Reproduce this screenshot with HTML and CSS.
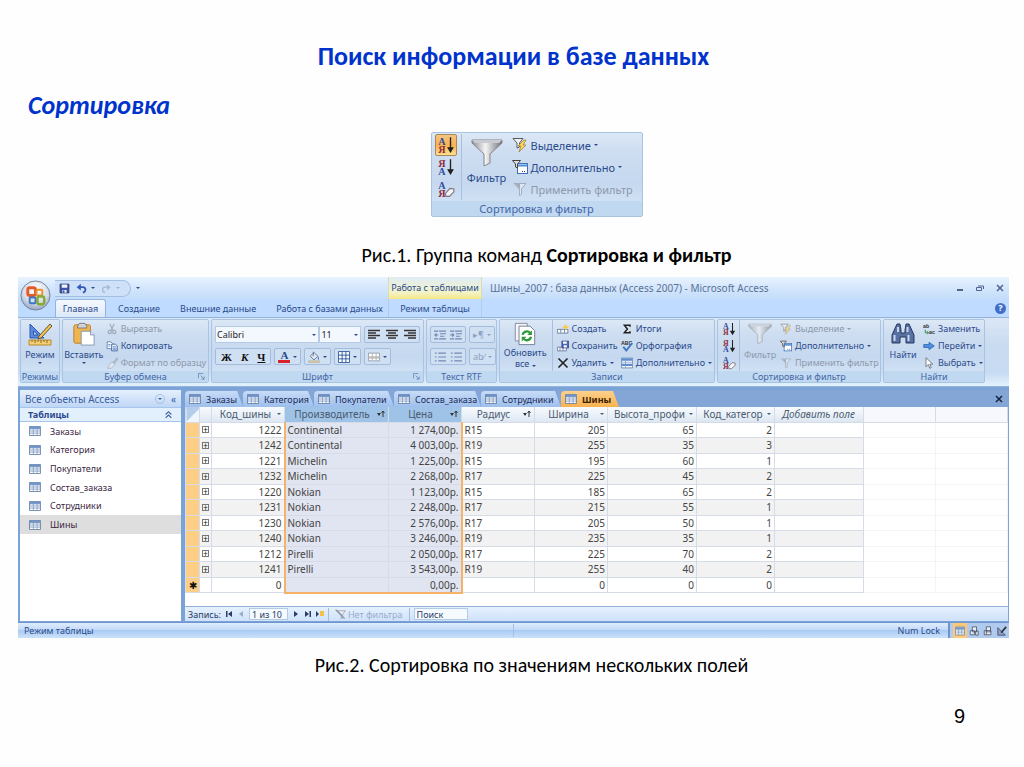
FILE: index.html
```html
<!DOCTYPE html>
<html lang="ru">
<head>
    <meta charset="UTF-8">
    <meta name="viewport" content="width=device-width, initial-scale=1.0">
    <title>Поиск информации в базе данных</title>
    <link rel="stylesheet" href="styles.css">
</head>
<body>
    <!-- Icon set -->
    <svg class="icon-defs" aria-hidden="true">
        <defs>
            <linearGradient id="steel" x1="0" x2="1" y1="0" y2="0">
                <stop offset="0" stop-color="#8c8f96"/>
                <stop offset="0.45" stop-color="#f4f4f4"/>
                <stop offset="1" stop-color="#6f7279"/>
            </linearGradient>
            <radialGradient id="orb" cx="0.5" cy="0.3" r="0.75">
                <stop offset="0" stop-color="#ffffff"/>
                <stop offset="0.6" stop-color="#d5dbe6"/>
                <stop offset="1" stop-color="#8a9bb8"/>
            </radialGradient>
            <symbol id="i-az" viewBox="0 0 16 16">
                <text x="1" y="8" class="glyph blue">А</text>
                <text x="1" y="15" class="glyph red">Я</text>
                <path d="M12 1v12M10 10.500L12 14l2-3.500z" stroke="#222" stroke-width="1.200" fill="#222"/>
            </symbol>
            <symbol id="i-za" viewBox="0 0 16 16">
                <text x="1" y="8" class="glyph red">Я</text>
                <text x="1" y="15" class="glyph blue">А</text>
                <path d="M12 1v12M10 10.500L12 14l2-3.500z" stroke="#222" stroke-width="1.200" fill="#222"/>
            </symbol>
            <symbol id="i-clear" viewBox="0 0 16 16">
                <text x="1" y="8" class="glyph blue">А</text>
                <text x="1" y="15" class="glyph red">Я</text>
                <path d="M7.500 12l4-4.500 3.500.5v2.500L11 14.500H8z" fill="#f6f3f4" stroke="#7a7480"/>
            </symbol>
            <symbol id="i-funnel" viewBox="0 0 32 28">
                <path d="M1 1h30v3L19 15v9l-6 3V15L1 4z" fill="url(#steel)" stroke="#85878c"/>
                <path d="M1 1h30L28 4H4z" fill="#c9cbd0"/>
            </symbol>
            <symbol id="i-bolt" viewBox="0 0 16 16">
                <path d="M1 1.500h10L7.500 6v4l-2.500 1V6z" fill="#f2f2f2" stroke="#555a66"/>
                <path d="M12 3L6 9h3l-2 6 7-7h-3l3-5z" fill="#ffd75a" stroke="#a5823a" stroke-width=".8"/>
            </symbol>
            <symbol id="i-adv" viewBox="0 0 16 16">
                <rect x="5.500" y="4.500" width="10" height="10" fill="#fff" stroke="#3b6fb8"/>
                <path d="M5.500 5.500h10v2h-10z" fill="#4c8ad9"/>
                <path d="M10 12.500h1m1 0h1" stroke="#335"/>
                <path d="M.5 1.500h8L5.500 5v4L3.500 8V5z" fill="#dfe0e4" stroke="#444"/>
            </symbol>
            <symbol id="i-apply" viewBox="0 0 16 16">
                <path d="M2 2.500h12L9.500 8v5.500l-2 1V8z" fill="#e9ecf0" stroke="#8b93a0"/>
                <path d="M3 3h5v6z" fill="#8b93a0"/>
            </symbol>
            <symbol id="i-table" viewBox="0 0 14 12">
                <path d="M.5.500h13v11H.5z" fill="#fff" stroke="#54719c"/>
                <path d="M1 1h12v2.500H1z" fill="#6a93cf"/>
                <path d="M1 3.500h12M1 6h12M1 8.500h12M5 1v10M9.500 1v10" stroke="#7f9ac0" fill="none"/>
            </symbol>
            <symbol id="i-design" viewBox="0 0 24 24">
                <path d="M2 2v14h14zM5.500 9v4H10z" fill="#5a8be0" stroke="#2c56ad" fill-rule="evenodd"/>
                <path d="M1 18h22v5H1z" fill="#f3ce74" stroke="#b98a2f"/>
                <path d="M4 18v2m3-2v3m3-3v2m3-2v3m3-3v2m3-2v3" stroke="#92691c"/>
                <path d="M22 2L11 14l-1 3 3-1L24 4z" fill="#f7c443" stroke="#5f554a"/>
            </symbol>
            <symbol id="i-paste" viewBox="0 0 24 26">
                <rect x="1" y="3" width="18" height="20" rx="2" fill="#efb551" stroke="#b77d2a"/>
                <path d="M5 4.500l2-3h6l2 3v2H5z" fill="#cfd2d8" stroke="#777"/>
                <path d="M9 10h10l4 4v11H9z" fill="#fff" stroke="#8496b3"/>
                <path d="M19 10v4h4" fill="#dce6f5" stroke="#8496b3"/>
            </symbol>
            <symbol id="i-cut" viewBox="0 0 16 16">
                <path d="M5 1l4.500 9M11 1L6.500 10" stroke="#7d8798" stroke-width="1.500"/>
                <circle cx="5" cy="12" r="2.200" fill="none" stroke="#7d8798" stroke-width="1.500"/>
                <circle cx="11" cy="12" r="2.200" fill="none" stroke="#7d8798" stroke-width="1.500"/>
            </symbol>
            <symbol id="i-copy" viewBox="0 0 16 16">
                <path d="M1.500 2.500h5l2 2v7h-7z" fill="#fff" stroke="#4469a8"/>
                <path d="M7.500 5.500h5l2.500 2.500v6.500H7.500z" fill="#e8f0fb" stroke="#28508f"/>
                <path d="M3 6h3M3 8h3M9 9h4M9 11h5M9 13h5" stroke="#4d78bf"/>
            </symbol>
            <symbol id="i-brush" viewBox="0 0 16 16">
                <path d="M15 1L9 7l2 2 4-5z" fill="#a9afb8" stroke="#818997"/>
                <path d="M8 6.500L12 10 7 15H2c2-2 2-6 6-8.500z" fill="#eceef1" stroke="#8b93a0"/>
            </symbol>
            <symbol id="i-left" viewBox="0 0 12 11"><path d="M0 1h12M0 3.500h8M0 6h12M0 8.500h8" stroke="#333" stroke-width="1.500"/></symbol>
            <symbol id="i-center" viewBox="0 0 12 11"><path d="M0 1h12M2 3.500h8M0 6h12M2 8.500h8" stroke="#333" stroke-width="1.500"/></symbol>
            <symbol id="i-right" viewBox="0 0 12 11"><path d="M0 1h12M4 3.500h8M0 6h12M4 8.500h8" stroke="#333" stroke-width="1.500"/></symbol>
            <symbol id="i-indent" viewBox="0 0 14 11"><path d="M0 1h5M6 1h8M7 4h7M7 7h5M0 10h5M6 10h8M5 5.500H1M3 3.500L1 5.500l2 2" fill="none" stroke="#7088b3" stroke-width="1.300"/></symbol>
            <symbol id="i-outdent" viewBox="0 0 14 11"><path d="M0 1h5M6 1h8M7 4h7M7 7h5M0 10h5M6 10h8M0 5.500h4M2.500 3.500l2 2-2 2" fill="none" stroke="#7088b3" stroke-width="1.300"/></symbol>
            <symbol id="i-list" viewBox="0 0 14 11"><path d="M1 1h2M1 5.500h2M1 10h2M5 1h9M5 5.500h9M5 10h9" stroke="#7088b3" stroke-width="1.300"/></symbol>
            <symbol id="i-bucket" viewBox="0 0 16 16">
                <path d="M3 7l5-5 5 5-5 5z" fill="#e2e7ef" stroke="#4f5f7c"/>
                <path d="M7 7V1" stroke="#4f5f7c"/>
                <path d="M13 7c2 2 2 4 1 5-1-1-1-3-1-5z" fill="#3d6fb8"/>
                <path d="M1 13h14v3H1z" fill="#d7c9a8" stroke="#a39a83" stroke-width=".5"/>
            </symbol>
            <symbol id="i-borders" viewBox="0 0 13 13"><path d="M.5.500h12v12H.5zM.5 4.500h12M.5 8.500h12M4.500.500v12M8.500.500v12" fill="#f7fbff" stroke="#335a9b"/></symbol>
            <symbol id="i-altrow" viewBox="0 0 14 10"><path d="M.5.500h13v9H.5z" fill="#fff" stroke="#8e98a8"/><path d="M1 4h12v3H1z" fill="#c9c3bb"/><path d="M5 1v8M9.500 1v8" stroke="#a9b2c0"/></symbol>
            <symbol id="i-refresh" viewBox="0 0 24 26">
                <path d="M1.500 1.500h13v19h-13z" fill="#f5f7fa" stroke="#7f8a9b"/>
                <path d="M5.500 4.500h12l5 5v15h-17z" fill="#fff" stroke="#6d7b91"/>
                <path d="M9.500 14a4.500 4.500 0 0 1 8-2M18.500 16a4.500 4.500 0 0 1-8 2" fill="none" stroke="#2f9a3c" stroke-width="2.500"/>
                <path d="M19.500 9v5h-5zM8.500 21v-5h5z" fill="#2f9a3c"/>
            </symbol>
            <symbol id="i-new" viewBox="0 0 16 16">
                <path d="M.5 8.500h14v5H.5z" fill="#f7f9fc" stroke="#53698f"/><path d="M5 9v4M10 9v4" stroke="#53698f"/>
                <path d="M11 1l1.500 3L16 5l-3 2-1 3-2-3-3-1 3-2z" fill="#ffc83d"/>
            </symbol>
            <symbol id="i-save-rec" viewBox="0 0 16 16">
                <path d="M.5 9.500h12v5H.5z" fill="#f7f9fc" stroke="#53698f"/><path d="M4 10v4M8 10v4" stroke="#53698f"/>
                <path d="M6.500 1.500h9v9h-9z" fill="#4d68b5" stroke="#2e3f80"/><path d="M8 2h5v3H8zM9 7h4v3H9z" fill="#fff"/>
            </symbol>
            <symbol id="i-delete" viewBox="0 0 16 16"><path d="M2 2l12 12M14 2L2 14" stroke="#222" stroke-width="2.200"/></symbol>
            <symbol id="i-sum" viewBox="0 0 16 16"><path d="M12 5V3H4.500L8.500 8l-4 5H12V11" fill="none" stroke="#222" stroke-width="2"/></symbol>
            <symbol id="i-spell" viewBox="0 0 16 16">
                <text x="0" y="6" class="tiny-glyph">ABC</text>
                <path d="M3 9l4 5 8-10" fill="none" stroke="#3e74c4" stroke-width="2.500"/>
            </symbol>
            <symbol id="i-more" viewBox="0 0 16 16"><path d="M.5 1.500h15v13H.5z" fill="#fff" stroke="#4b6ea8"/><path d="M1 2h14v3H1zM1 9h14v3H1z" fill="#5d8bd0"/><path d="M1 7h14M6 5v9" stroke="#7f9ac0"/></symbol>
            <symbol id="i-find" viewBox="0 0 24 24">
                <path d="M6 2h3l1 6v3h4V8l1-6h3l5 11v8h-8v-6h-6v6H1v-8z" fill="#5870a2" stroke="#27395f"/>
                <path d="M3.500 13v6M7 5v5M17.500 13v6M16.500 5v5" stroke="#c7d6f2" stroke-width="2"/>
            </symbol>
            <symbol id="i-replace" viewBox="0 0 16 16">
                <text x="0" y="7" class="tiny-glyph">ab</text><text x="8" y="15" class="tiny-glyph">ac</text>
                <path d="M3 9v4h4M5.500 11l2 2-2 2" fill="none" stroke="#2f8a4a" stroke-width="1.300"/>
            </symbol>
            <symbol id="i-goto" viewBox="0 0 16 16"><path d="M1 6h7V3l7 5-7 5v-3H1z" fill="#4f8fe0" stroke="#2a61ae"/></symbol>
            <symbol id="i-cursor" viewBox="0 0 16 16"><path d="M4 1v12l3-3 2 5 2-1-2-4.500h4z" fill="#fff" stroke="#555c6a"/></symbol>
            <symbol id="i-floppy" viewBox="0 0 16 16"><path d="M1.500 1.500h13v13h-13z" fill="#3f54a8" stroke="#26346f"/><path d="M4 2h8v5H4zM5 10h6v4H5z" fill="#f2f5fb"/><path d="M6 11h2v3H6z" fill="#26346f"/></symbol>
            <symbol id="i-undo" viewBox="0 0 16 16"><path d="M4 6h6c5 0 5 7 0 8" fill="none" stroke="#3359bb" stroke-width="2.600"/><path d="M7 1v10L1 6z" fill="#3359bb"/></symbol>
            <symbol id="i-redo" viewBox="0 0 16 16"><path d="M12 6H6C1 6 1 13 6 14" fill="none" stroke="#a9b9d6" stroke-width="2"/><path d="M9 2v9l5-5z" fill="#a9b9d6"/></symbol>
            <symbol id="i-office" viewBox="0 0 32 32">
                <circle cx="16" cy="16" r="15" fill="url(#orb)" stroke="#71819f"/>
                <rect x="8" y="8" width="8" height="8" rx="2" fill="none" stroke="#e2592a" stroke-width="3"/>
                <rect x="17" y="10" width="6" height="6" rx="1" fill="none" stroke="#e8932c" stroke-width="2"/>
                <rect x="10" y="18" width="6" height="6" rx="1" fill="none" stroke="#3d78c4" stroke-width="2"/>
                <rect x="18" y="17" width="7" height="8" rx="2" fill="none" stroke="#84ab35" stroke-width="2.500"/>
            </symbol>
            <symbol id="i-launch" viewBox="0 0 8 8"><path d="M.5 6V.500H6M3 3l4 4M7 4v3H4" fill="none" stroke="#6b8ab8"/></symbol>
            <symbol id="i-sorted" viewBox="0 0 8 8"><path d="M0 3h4L2 6z" fill="#333"/><path d="M6 7V1.500M4.500 3L6 1l1.500 2" fill="none" stroke="#333"/></symbol>
        </defs>
    </svg>

    <main class="slide">
        <h1>Поиск информации в базе данных</h1>
        <h2>Сортировка</h2>

        <figure class="fig-group">
            <section class="group group-large">
                <div class="group-body">
                    <div class="sort-buttons">
                        <button class="icon-button active" aria-label="По возрастанию"><svg><use href="#i-az"/></svg></button>
                        <button class="icon-button" aria-label="По убыванию"><svg><use href="#i-za"/></svg></button>
                        <button class="icon-button" aria-label="Очистить"><svg><use href="#i-clear"/></svg></button>
                    </div>
                    <button class="big-button"><svg><use href="#i-funnel"/></svg>Фильтр</button>
                    <div class="commands">
                        <button><svg><use href="#i-bolt"/></svg>Выделение<i class="arrow"></i></button>
                        <button><svg><use href="#i-adv"/></svg>Дополнительно<i class="arrow"></i></button>
                        <button disabled><svg><use href="#i-apply"/></svg>Применить фильтр</button>
                    </div>
                </div>
                <div class="group-title">Сортировка и фильтр</div>
            </section>
            <figcaption>Рис.1. Группа команд <b>Сортировка и фильтр</b></figcaption>
        </figure>

        <figure class="fig-window">
            <div class="window">
                <!-- Title bar -->
                <header class="title-bar">
                    <button class="office-button" aria-label="Office"><svg><use href="#i-office"/></svg></button>
                    <div class="title-left">
                        <div class="quick-access">
                            <button aria-label="Сохранить"><svg><use href="#i-floppy"/></svg></button>
                            <button aria-label="Отменить"><svg><use href="#i-undo"/></svg><i class="arrow"></i></button>
                            <button aria-label="Вернуть" disabled><svg><use href="#i-redo"/></svg><i class="arrow"></i></button>
                        </div>
                        <i class="arrow customize"></i>
                    </div>
                    <div class="context-title">Работа с таблицами</div>
                    <div class="title-right">
                        <span class="title-text">Шины_2007 : база данных (Access 2007) - Microsoft Access</span>
                        <button aria-label="Свернуть"><svg viewBox="0 0 8 8"><path d="M1 6h6" stroke="#50648c" stroke-width="2"/></svg></button>
                        <button aria-label="Восстановить"><svg viewBox="0 0 8 8"><path d="M.5 3.500h5v3h-5zM2 2h5.500v3" fill="none" stroke="#50648c"/></svg></button>
                        <button aria-label="Закрыть"><svg viewBox="0 0 8 8"><path d="M1 1l6 6M7 1L1 7" stroke="#50648c" stroke-width="1.500"/></svg></button>
                    </div>
                </header>

                <!-- Ribbon tabs -->
                <nav class="ribbon-tabs">
                    <div class="tab-list">
                        <button class="selected">Главная</button>
                        <button>Создание</button>
                        <button>Внешние данные</button>
                        <button>Работа с базами данных</button>
                    </div>
                    <button class="context-tab">Режим таблицы</button>
                    <button class="help" aria-label="Справка">?</button>
                </nav>

                <!-- Ribbon -->
                <div class="ribbon">
                    <section class="group">
                        <div class="group-body">
                            <button class="big-button"><svg><use href="#i-design"/></svg>Режим<i class="arrow"></i></button>
                        </div>
                        <div class="group-title">Режимы</div>
                    </section>

                    <section class="group">
                        <div class="group-body">
                            <button class="big-button paste"><svg><use href="#i-paste"/></svg>Вставить<i class="arrow"></i></button>
                            <div class="commands">
                                <button disabled><svg><use href="#i-cut"/></svg>Вырезать</button>
                                <button><svg><use href="#i-copy"/></svg>Копировать</button>
                                <button disabled><svg><use href="#i-brush"/></svg>Формат по образцу</button>
                            </div>
                        </div>
                        <div class="group-title">Буфер обмена<svg class="launcher"><use href="#i-launch"/></svg></div>
                    </section>

                    <section class="group">
                        <div class="group-body toolbars">
                            <div class="toolbar">
                                <div class="combos">
                                    <span class="combo combo-font"><select aria-label="Шрифт"><option>Calibri</option></select><i class="arrow"></i></span>
                                    <span class="combo combo-size"><select aria-label="Размер"><option>11</option></select><i class="arrow"></i></span>
                                </div>
                                <div class="button-set">
                                    <button aria-label="По левому краю"><svg><use href="#i-left"/></svg></button>
                                    <button aria-label="По центру"><svg><use href="#i-center"/></svg></button>
                                    <button aria-label="По правому краю"><svg><use href="#i-right"/></svg></button>
                                </div>
                            </div>
                            <div class="toolbar left">
                                <div class="button-set letters">
                                    <button><b>Ж</b></button>
                                    <button><b><em>К</em></b></button>
                                    <button><b><u>Ч</u></b></button>
                                </div>
                                <div class="button-set"><button aria-label="Цвет шрифта"><span class="font-color">A</span><i class="arrow"></i></button></div>
                                <div class="button-set"><button aria-label="Заливка"><svg><use href="#i-bucket"/></svg><i class="arrow"></i></button></div>
                                <div class="button-set"><button aria-label="Сетка"><svg><use href="#i-borders"/></svg><i class="arrow"></i></button></div>
                                <div class="button-set"><button aria-label="Чередование"><svg><use href="#i-altrow"/></svg><i class="arrow"></i></button></div>
                            </div>
                        </div>
                        <div class="group-title">Шрифт<svg class="launcher"><use href="#i-launch"/></svg></div>
                    </section>

                    <section class="group">
                        <div class="group-body toolbars rtf">
                            <div class="toolbar">
                                <div class="button-set">
                                    <button disabled aria-label="Уменьшить отступ"><svg><use href="#i-indent"/></svg></button>
                                    <button disabled aria-label="Увеличить отступ"><svg><use href="#i-outdent"/></svg></button>
                                </div>
                                <div class="button-set"><button disabled>▸¶<i class="arrow"></i></button></div>
                            </div>
                            <div class="toolbar">
                                <div class="button-set">
                                    <button disabled aria-label="Нумерация"><svg><use href="#i-list"/></svg></button>
                                    <button disabled aria-label="Маркеры"><svg><use href="#i-list"/></svg></button>
                                </div>
                                <div class="button-set"><button disabled>ab∕<i class="arrow"></i></button></div>
                            </div>
                        </div>
                        <div class="group-title">Текст RTF</div>
                    </section>

                    <section class="group">
                        <div class="group-body">
                            <button class="big-button wide"><svg><use href="#i-refresh"/></svg>Обновить<span>все <i class="arrow"></i></span></button>
                            <div class="commands divided">
                                <button><svg><use href="#i-new"/></svg>Создать</button>
                                <button><svg><use href="#i-save-rec"/></svg>Сохранить</button>
                                <button><svg><use href="#i-delete"/></svg>Удалить<i class="arrow"></i></button>
                            </div>
                            <div class="commands">
                                <button><svg><use href="#i-sum"/></svg>Итоги</button>
                                <button><svg><use href="#i-spell"/></svg>Орфография</button>
                                <button><svg><use href="#i-more"/></svg>Дополнительно<i class="arrow"></i></button>
                            </div>
                        </div>
                        <div class="group-title">Записи</div>
                    </section>

                    <section class="group">
                        <div class="group-body">
                            <div class="sort-buttons">
                                <button class="icon-button" aria-label="По возрастанию"><svg><use href="#i-az"/></svg></button>
                                <button class="icon-button" aria-label="По убыванию"><svg><use href="#i-za"/></svg></button>
                                <button class="icon-button" aria-label="Очистить"><svg><use href="#i-clear"/></svg></button>
                            </div>
                            <button class="big-button" disabled><svg><use href="#i-funnel"/></svg>Фильтр</button>
                            <div class="commands">
                                <button disabled><svg><use href="#i-bolt"/></svg>Выделение<i class="arrow"></i></button>
                                <button><svg><use href="#i-adv"/></svg>Дополнительно<i class="arrow"></i></button>
                                <button disabled><svg><use href="#i-apply"/></svg>Применить фильтр</button>
                            </div>
                        </div>
                        <div class="group-title">Сортировка и фильтр</div>
                    </section>

                    <section class="group">
                        <div class="group-body">
                            <button class="big-button"><svg><use href="#i-find"/></svg>Найти</button>
                            <div class="commands">
                                <button><svg><use href="#i-replace"/></svg>Заменить</button>
                                <button><svg><use href="#i-goto"/></svg>Перейти<i class="arrow"></i></button>
                                <button><svg><use href="#i-cursor"/></svg>Выбрать<i class="arrow"></i></button>
                            </div>
                        </div>
                        <div class="group-title">Найти</div>
                    </section>
                </div>

                <!-- Work area -->
                <div class="workspace">
                    <aside class="nav-pane">
                        <div class="nav-head">Все объекты Access<button class="nav-menu" aria-label="Меню"><i class="arrow"></i></button><button aria-label="Свернуть область">«</button></div>
                        <div class="nav-section">Таблицы<button aria-label="Свернуть"><svg viewBox="0 0 8 8"><path d="M1.500 4L4 1.500 6.500 4M1.500 7L4 4.500 6.500 7" fill="none" stroke="#3d5f9f"/></svg></button></div>
                        <ul class="nav-items">
                            <li><a href="#"><svg><use href="#i-table"/></svg>Заказы</a></li>
                            <li><a href="#"><svg><use href="#i-table"/></svg>Категория</a></li>
                            <li><a href="#"><svg><use href="#i-table"/></svg>Покупатели</a></li>
                            <li><a href="#"><svg><use href="#i-table"/></svg>Состав_заказа</a></li>
                            <li><a href="#"><svg><use href="#i-table"/></svg>Сотрудники</a></li>
                            <li class="current"><a href="#"><svg><use href="#i-table"/></svg>Шины</a></li>
                        </ul>
                    </aside>

                    <div class="document">
                        <div class="doc-tabs">
                            <button><svg><use href="#i-table"/></svg>Заказы</button>
                            <button><svg><use href="#i-table"/></svg>Категория</button>
                            <button><svg><use href="#i-table"/></svg>Покупатели</button>
                            <button><svg><use href="#i-table"/></svg>Состав_заказа</button>
                            <button><svg><use href="#i-table"/></svg>Сотрудники</button>
                            <button class="selected"><svg><use href="#i-table"/></svg>Шины</button>
                            <button class="doc-close" aria-label="Закрыть"><svg viewBox="0 0 8 8"><path d="M1 1l6 6M7 1L1 7" stroke="#16233f" stroke-width="1.500"/></svg></button>
                        </div>
                        <div class="sheet">
                            <table>
                                <colgroup>
                                    <col class="c-mark"><col class="c-plus"><col class="c-mid"><col class="c-maker"><col class="c-mid"><col class="c-mid"><col class="c-mid"><col class="c-wide"><col class="c-cat"><col class="c-wide"><col><col>
                                </colgroup>
                                <thead>
                                    <tr>
                                        <th class="corner"></th>
                                        <th></th>
                                        <th><div>Код_шины<i class="arrow"></i></div></th>
                                        <th class="sel"><div>Производитель<svg><use href="#i-sorted"/></svg></div></th>
                                        <th class="sel"><div>Цена<svg><use href="#i-sorted"/></svg></div></th>
                                        <th><div>Радиус<svg><use href="#i-sorted"/></svg></div></th>
                                        <th><div>Ширина<i class="arrow"></i></div></th>
                                        <th><div>Высота_профи<i class="arrow"></i></div></th>
                                        <th><div>Код_категор<i class="arrow"></i></div></th>
                                        <th class="add">Добавить поле</th>
                                        <th class="blank"></th>
                                        <th class="blank"></th>
                                    </tr>
                                </thead>
                                <tbody>
                                    <tr><td></td><td><button>+</button></td><td>1222</td><td>Continental</td><td>1 274,00р.</td><td>R15</td><td>205</td><td>65</td><td>2</td><td></td><td></td><td></td></tr>
                                    <tr><td></td><td><button>+</button></td><td>1242</td><td>Continental</td><td>4 003,00р.</td><td>R19</td><td>255</td><td>35</td><td>3</td><td></td><td></td><td></td></tr>
                                    <tr><td></td><td><button>+</button></td><td>1221</td><td>Michelin</td><td>1 225,00р.</td><td>R15</td><td>195</td><td>60</td><td>1</td><td></td><td></td><td></td></tr>
                                    <tr><td></td><td><button>+</button></td><td>1232</td><td>Michelin</td><td>2 268,00р.</td><td>R17</td><td>225</td><td>45</td><td>2</td><td></td><td></td><td></td></tr>
                                    <tr><td></td><td><button>+</button></td><td>1220</td><td>Nokian</td><td>1 123,00р.</td><td>R15</td><td>185</td><td>65</td><td>2</td><td></td><td></td><td></td></tr>
                                    <tr><td></td><td><button>+</button></td><td>1231</td><td>Nokian</td><td>2 248,00р.</td><td>R17</td><td>215</td><td>55</td><td>1</td><td></td><td></td><td></td></tr>
                                    <tr><td></td><td><button>+</button></td><td>1230</td><td>Nokian</td><td>2 576,00р.</td><td>R17</td><td>205</td><td>50</td><td>1</td><td></td><td></td><td></td></tr>
                                    <tr><td></td><td><button>+</button></td><td>1240</td><td>Nokian</td><td>3 246,00р.</td><td>R19</td><td>235</td><td>35</td><td>1</td><td></td><td></td><td></td></tr>
                                    <tr><td></td><td><button>+</button></td><td>1212</td><td>Pirelli</td><td>2 050,00р.</td><td>R17</td><td>225</td><td>70</td><td>2</td><td></td><td></td><td></td></tr>
                                    <tr><td></td><td><button>+</button></td><td>1241</td><td>Pirelli</td><td>3 543,00р.</td><td>R19</td><td>255</td><td>40</td><td>2</td><td></td><td></td><td></td></tr>
                                    <tr class="new-row"><td>✱</td><td></td><td>0</td><td></td><td>0,00р.</td><td></td><td>0</td><td>0</td><td>0</td><td></td><td></td><td></td></tr>
                                </tbody>
                            </table>
                        </div>
                        <div class="record-nav">
                            <label for="record">Запись:</label>
                            <button aria-label="Первая"><svg viewBox="0 0 8 8"><path d="M1 1h1.500v6H1zM7 1v6L3 4z"/></svg></button>
                            <button aria-label="Предыдущая" disabled><svg viewBox="0 0 8 8"><path d="M6 1v6L2 4z"/></svg></button>
                            <input id="record" class="record-input" value="1 из 10">
                            <button aria-label="Следующая"><svg viewBox="0 0 8 8"><path d="M2 1v6l4-3z"/></svg></button>
                            <button aria-label="Последняя"><svg viewBox="0 0 8 8"><path d="M1 1v6l4-3zM5.500 1H7v6H5.500z"/></svg></button>
                            <button aria-label="Новая"><svg viewBox="0 0 8 8"><path d="M0 1v6l3-3z"/><path d="M4 1h4v5H4z" fill="#f2c14a"/></svg></button>
                            <button class="no-filter" disabled><svg viewBox="0 0 16 16"><path d="M4 2.500h11L11 8v5l-2 1V8z" fill="#e9ecf0" stroke="#8b93a0"/><path d="M1 1l13 13" stroke="#8b93a0" stroke-width="2"/></svg>Нет фильтра</button>
                            <input class="search-input" aria-label="Поиск" value="Поиск">
                        </div>
                    </div>
                </div>

                <!-- Status bar -->
                <footer class="status-bar">
                    <span class="status-mode">Режим таблицы</span>
                    <span class="status-lock">Num Lock</span>
                    <div class="view-buttons">
                        <button class="active" aria-label="Таблица"><svg><use href="#i-table"/></svg></button>
                        <button aria-label="Сводная таблица"><svg viewBox="0 0 12 12"><path d="M4 1h5v6H4zM1.500 5.500h5v5h-5zM8 6h3v5H8z" fill="#e7eefa" stroke="#4b5468"/></svg></button>
                        <button aria-label="Сводная диаграмма"><svg viewBox="0 0 12 12"><path d="M4 1h5v6H4zM1.500 5.500h8v5h-8zM4 6v4" fill="#e7eefa" stroke="#4b5468"/></svg></button>
                        <button aria-label="Конструктор"><svg viewBox="0 0 12 12"><path d="M1 2v9h9z" fill="#8fa4cc" stroke="#3f4a60"/><path d="M11 1L5 8" stroke="#333" stroke-width="2"/></svg></button>
                    </div>
                </footer>
            </div>
            <figcaption>Рис.2. Сортировка по значениям нескольких полей</figcaption>
        </figure>

        <div class="page-number">9</div>
    </main>
</body>
</html>
```
FILE: styles.css
```css
* {
    box-sizing: border-box;
}
body {
    margin: 0;
    background-color: #fefefe;
    color: #000;
    font-family: Carlito, Lato, "Open Sans", sans-serif;
}
button, input, select {
    font: inherit;
    color: inherit;
    margin: 0;
    padding: 0;
    border: none;
    background: none;
}
svg {
    display: block;
    flex: none;
}
.icon-defs {
    position: absolute;
    width: 0;
    height: 0;
}
.glyph {
    font: bold 9px "Liberation Serif", serif;
}
.tiny-glyph {
    font: bold 7px "Liberation Sans", sans-serif;
    fill: #333;
}
.blue {
    fill: #2d4b9b;
}
.red {
    fill: #8e2f3c;
}

/* Slide */
.slide {
    padding: 41px 15px 0 18px;
}
h1 {
    margin: 0;
    font-size: 26px;
    line-height: 30px;
    text-align: center;
    color: #0033cc;
}
h2 {
    margin: 19px 0 0 10px;
    font-size: 26px;
    line-height: 30px;
    font-style: italic;
    color: #0033cc;
}
figure {
    margin: 0;
}
figcaption {
    font-size: 20px;
    line-height: 24px;
    text-align: center;
}
.fig-group {
    display: flex;
    flex-direction: column;
    align-items: center;
    gap: 26px;
    margin: 12px 0 10px;
    padding-left: 46px;
}
.fig-group figcaption {
    padding-left: 20px;
}
.fig-window figcaption {
    margin-top: 15px;
    padding-left: 36px;
}
.page-number {
    margin-top: 28px;
    padding-right: 44px;
    font: 20px/22px "Liberation Sans", Arial, sans-serif;
    text-align: right;
}

/* Ribbon groups */
.group, .window {
    font-family: "Noto Sans", Tahoma, sans-serif;
    font-size: 9px;
    color: #2a4a8c;
}
.group {
    display: flex;
    flex-direction: column;
    min-width: 0;
    border: 1px solid #a9c4e3;
    border-radius: 2px;
    background: linear-gradient(#dce8f6, #cfdef1 20%, #c5d8ef 60%, #d9e8f8);
    white-space: nowrap;
}
.group-body {
    display: flex;
    flex: 1;
    align-items: stretch;
    gap: 3px;
    padding: 0 2px;
    min-width: 0;
}
.group-title {
    position: relative;
    height: 11px;
    line-height: 11px;
    text-align: center;
    color: #4467a8;
    background-color: #c0d8f0;
}
.launcher {
    position: absolute;
    right: 3px;
    top: 2px;
    width: 7px;
    height: 7px;
}
.arrow {
    display: inline-block;
    flex: none;
    border: 2px solid transparent;
    border-top-color: currentColor;
    border-bottom: none;
}
.big-button {
    display: flex;
    flex-direction: column;
    align-items: center;
    gap: 2px;
    min-width: 34px;
    line-height: 11px;
    padding-top: 2px;
}
.big-button svg {
    width: 24px;
    height: 24px;
    margin-bottom: 1px;
}
.big-button.wide {
    width: 48px;
    gap: 0;
}
.big-button.paste {
    width: 42px;
}
.big-button:disabled, .commands button:disabled {
    color: #8e99ab;
}
.big-button:disabled svg, .commands button:disabled svg {
    opacity: 0.6;
}
.commands {
    display: grid;
    grid-template-rows: repeat(3, 17px);
}
.commands button {
    display: flex;
    align-items: center;
    gap: 3px;
}
.commands svg {
    width: 12px;
    height: 12px;
}
.divided {
    border-left: 1px solid #a8bfdd;
    padding-left: 4px;
}
.sort-buttons {
    display: grid;
    grid-template-rows: repeat(3, 17px);
    padding: 0 3px 0 2px;
    border-right: 1px solid #a8bfdd;
}
.sort-buttons svg {
    width: 14px;
    height: 14px;
}
.icon-button {
    display: grid;
    place-items: center;
}

/* Enlarged group of the first figure */
.group-large {
    width: 212px;
    font-size: 11px;
}
.group-large .group-body {
    gap: 5px;
    padding: 1px 3px;
}
.group-large .group-title {
    height: 15px;
    line-height: 15px;
}
.group-large .sort-buttons, .group-large .commands {
    grid-template-rows: repeat(3, 22px);
}
.group-large .sort-buttons {
    padding: 0 4px 0 0;
}
.group-large .sort-buttons svg {
    width: 18px;
    height: 18px;
}
.group-large .icon-button {
    width: 22px;
    border: 1px solid transparent;
    border-radius: 2px;
}
.group-large .icon-button.active {
    border-color: #a98a56;
    background: linear-gradient(#f3c583, #fbb04e 50%, #fddf8e);
}
.group-large .big-button {
    width: 40px;
    gap: 4px;
    padding-top: 5px;
}
.group-large .big-button svg {
    width: 32px;
    height: 28px;
}
.group-large .commands svg {
    width: 16px;
    height: 16px;
}

/* Application window */
.window {
    background-color: #bfdbff;
}
.title-bar, .ribbon-tabs {
    display: grid;
    grid-template-columns: 370fr 94fr 527fr;
}
.title-bar {
    position: relative;
    height: 22px;
    background: linear-gradient(#e9f3ff, #d3e6fc 50%, #c5ddfa);
}
.office-button {
    position: absolute;
    left: 2px;
    top: 3px;
    z-index: 1;
}
.office-button svg {
    width: 31px;
    height: 31px;
}
.title-left {
    display: flex;
    align-items: center;
    gap: 5px;
    padding-left: 37px;
}
.quick-access {
    display: flex;
    align-items: center;
    gap: 6px;
    height: 17px;
    padding: 0 10px 0 4px;
    border: 1px solid #a3bfe3;
    border-left: none;
    border-radius: 0 9px 9px 0;
    background-color: #cfe1f8;
}
.quick-access button {
    display: flex;
    align-items: center;
    gap: 4px;
}
.quick-access button:disabled {
    color: #9fb2d0;
}
.quick-access svg {
    width: 11px;
    height: 11px;
}
.customize {
    color: #334a75;
}
.context-title {
    min-width: 0;
    border: solid #d9dcb0;
    border-width: 0 1px;
    line-height: 22px;
    text-align: center;
    white-space: nowrap;
    background: linear-gradient(#dfecf5, #f3f3c8 70%, #f6e685);
}
.title-right {
    display: flex;
    align-items: center;
    gap: 12px;
    padding: 0 5px 0 8px;
    color: #5a7196;
}
.title-text {
    flex: 1;
    font-size: 10px;
}
.title-right svg {
    width: 8px;
    height: 8px;
}
.ribbon-tabs {
    height: 18px;
    white-space: nowrap;
}
.tab-list {
    display: flex;
    min-width: 0;
    padding-left: 37px;
    gap: 20px;
}
.tab-list .selected {
    width: 51px;
    margin-right: -8px;
    border: 1px solid #93b3dd;
    border-bottom: none;
    border-radius: 3px 3px 0 0;
    background: linear-gradient(#f5f9ff, #dce9f8);
}
.context-tab {
    border: solid #b3cbe6;
    border-width: 0 1px;
}
.help {
    justify-self: end;
    align-self: center;
    width: 11px;
    height: 11px;
    margin-right: 3px;
    border-radius: 50%;
    background-color: #3f6fc8;
    color: #fff;
    font-weight: bold;
    line-height: 10px;
}
.ribbon {
    display: grid;
    grid-template-columns: 40fr 147fr 213fr 71fr 216fr 164fr 102fr;
    gap: 2px;
    height: 70px;
    padding: 1px 24px 3px 2px;
    border: solid #93b3dd;
    border-width: 1px 0;
    background: linear-gradient(#dbe7f5, #c9dbf0 40%, #c7dbf3 80%, #e2f2fd);
}

/* Text formatting toolbars */
.toolbars {
    flex-direction: column;
    gap: 5px;
    padding: 6px 3px 0;
}
.toolbar {
    display: flex;
    justify-content: space-between;
    gap: 3px;
    height: 17px;
}
.toolbar.left {
    justify-content: flex-start;
}
.combos {
    display: flex;
    flex: 1;
}
.combo {
    display: flex;
    align-items: center;
    padding-right: 2px;
    border: 1px solid #b4cbe8;
    background-color: #f3f8fe;
}
.combo select {
    flex: 1;
    min-width: 0;
    padding-left: 1px;
    appearance: none;
    color: #222;
}
.combo-font {
    flex: 107;
}
.combo-size {
    flex: 40;
}
.button-set {
    display: flex;
    gap: 6px;
    padding: 0 3px;
    border: 1px solid #a3bbdc;
    border-radius: 2px;
    background-color: #d0e0f3;
}
.button-set button {
    display: flex;
    align-items: center;
    gap: 3px;
}
.button-set svg {
    width: 12px;
    height: 12px;
}
.button-set button:disabled {
    color: #8da0c2;
}
.letters {
    gap: 9px;
    padding: 0 5px;
    font: 11px "Liberation Serif", serif;
    color: #111;
}
.font-color {
    width: 12px;
    border-bottom: 3px solid #d8232f;
    font: bold 11px/10px "Liberation Serif", serif;
    text-align: center;
}
.rtf .button-set {
    gap: 4px;
}

/* Work area */
.workspace {
    display: grid;
    grid-template-columns: 161fr 823fr;
    gap: 4px;
    height: 235px;
    padding: 3px 1px 1px 2px;
    background-color: #7ba3d8;
}
.nav-pane {
    min-width: 0;
    background-color: #fff;
}
.nav-head, .nav-section {
    display: flex;
    align-items: center;
    gap: 6px;
    padding: 0 5px;
}
.nav-head {
    height: 17px;
    font-size: 10px;
    color: #3d5f9f;
    background: linear-gradient(#e6f0fd, #bfd7f6);
}
.nav-menu {
    width: 10px;
    height: 10px;
    margin-left: auto;
    border: 1px solid #a7bfdf;
    border-radius: 50%;
    line-height: 5px;
}
.nav-menu .arrow {
    margin-bottom: 2px;
}
.nav-section {
    height: 15px;
    padding: 0 8px;
    border: solid #a7c5ec;
    border-width: 1px 0;
    font-weight: bold;
    background-color: #e2effd;
}
.nav-section button {
    margin-left: auto;
}
.nav-section svg {
    width: 9px;
    height: 9px;
}
.nav-items {
    display: grid;
    height: 112px;
    margin: 0;
    padding: 0;
    list-style: none;
}
.nav-items a {
    display: flex;
    align-items: center;
    gap: 9px;
    height: 100%;
    padding-left: 9px;
    color: #3b1f3f;
    text-decoration: none;
}
.nav-items svg {
    width: 12px;
    height: 10px;
}
.nav-items .current {
    background-color: #dedede;
}
.document {
    display: flex;
    flex-direction: column;
    min-width: 0;
}
.doc-tabs {
    display: grid;
    grid-template-columns: 58px 71px 80px 87px 80px 58px 1fr;
    grid-template-rows: 16px;
    height: 17px;
    padding-top: 1px;
    background-color: #84a6d6;
}
.doc-tabs button {
    display: flex;
    align-items: center;
    gap: 5px;
    padding-left: 4px;
    border-radius: 4px 4px 0 0;
    background: linear-gradient(#c8dcf8, #9dbfec);
    color: #1c2c58;
    white-space: nowrap;
    clip-path: polygon(0 0, calc(100% - 6px) 0, 100% 100%, 0 100%);
}
.doc-tabs svg {
    width: 12px;
    height: 10px;
}
.doc-tabs .selected {
    background: linear-gradient(#fdd08a, #f9b24f);
    color: #3f2200;
    font-weight: bold;
}
.doc-tabs .doc-close {
    justify-self: end;
    padding-right: 5px;
    background: none;
    clip-path: none;
}
.doc-tabs .doc-close svg {
    width: 8px;
    height: 8px;
}

/* Datasheet */
.sheet {
    flex: 1;
    background-color: #fff;
}
table {
    width: 100%;
    table-layout: fixed;
    border-collapse: collapse;
    font-size: 10px;
    color: #444;
}
.c-mark {
    width: 14px;
}
.c-plus {
    width: 12px;
}
.c-mid {
    width: 73px;
}
.c-maker {
    width: 104px;
}
.c-wide {
    width: 89px;
}
.c-cat {
    width: 78px;
}
th, td {
    height: 15px;
    padding: 0 2px;
    line-height: 14px;
    white-space: nowrap;
    border: 1px solid #d5dce8;
}
tbody tr:nth-child(even) td {
    height: 16px;
    background-color: #f2f2f2;
}
th {
    padding: 0 3px 0 2px;
    border-top: none;
    font-weight: normal;
    color: #4a5b72;
    background: linear-gradient(#f8fbfe, #dde7f2);
}
th div {
    display: grid;
    grid-template-columns: 1fr auto;
    align-items: center;
}
th svg {
    width: 8px;
    height: 8px;
}
th.sel {
    background: #9fc3e6;
}
th.add {
    font-style: italic;
}
th.corner {
    background: linear-gradient(135deg, #b4cdea 50%, #eef5fd 50%);
}
th.blank {
    background: #f7f8fd;
}
td {
    text-align: right;
}
td:nth-child(4), td:nth-child(6) {
    text-align: left;
}
tbody td:nth-child(1), tbody tr:nth-child(even) td:nth-child(1) {
    padding: 0;
    text-align: center;
    color: #111;
    background-color: #fdce85;
}
td:nth-child(2) {
    padding: 0;
    text-align: center;
}
td button {
    display: block;
    width: 7px;
    height: 7px;
    margin: 0 auto;
    border: 1px solid #777;
    font-size: 8px;
    line-height: 5px;
    color: #111;
}
tbody td:nth-child(4), tbody td:nth-child(5),
tbody tr:nth-child(even) td:nth-child(4), tbody tr:nth-child(even) td:nth-child(5) {
    background-color: #e1e5f1;
}
td:nth-child(4) {
    border-left: 2px solid #f5b36a;
}
td:nth-child(5) {
    border-right: 2px solid #f5b36a;
}
.new-row td:nth-child(4), .new-row td:nth-child(5) {
    border-bottom: 2px solid #f5b36a;
}
tbody td:nth-child(11), tbody td:nth-child(12),
tbody tr:nth-child(even) td:nth-child(11), tbody tr:nth-child(even) td:nth-child(12) {
    border-color: #f6f2f5;
    background-color: #fff;
}

/* Record navigation */
.record-nav {
    display: flex;
    align-items: center;
    gap: 4px;
    height: 15px;
    padding-left: 3px;
    border-top: 1px solid #8fb0d8;
    color: #2b3c66;
    background: linear-gradient(#e6f1fd, #cfe2fa);
}
.record-nav svg {
    width: 8px;
    height: 8px;
    fill: currentColor;
}
.record-nav button:disabled {
    color: #9aaccb;
}
.record-input, .search-input {
    height: 12px;
    padding: 0 2px;
    border: 1px solid #b4cbe8;
    background-color: #f5faff;
}
.record-input {
    width: 39px;
}
.search-input {
    width: 54px;
}
.no-filter {
    display: flex;
    align-items: center;
    gap: 2px;
    padding: 0 6px;
    border: solid #a3bbdc;
    border-width: 0 1px;
}
.no-filter svg {
    width: 11px;
    height: 11px;
}

/* Status bar */
.status-bar {
    display: flex;
    align-items: center;
    height: 16px;
    padding-left: 6px;
    border-top: 1px solid #6e95cd;
    background: linear-gradient(#dfedfd, #c2daf8 45%, #aacbf3 50%, #cbe2fb);
}
.status-mode {
    flex: 494;
}
.status-lock {
    flex: 430;
    padding-right: 8px;
    border-left: 1px solid #a4c0e6;
    text-align: right;
}
.view-buttons {
    display: flex;
    height: 100%;
    padding-left: 3px;
    border-left: 2px solid #7094c7;
    background-color: #b0cbee;
}
.view-buttons button {
    display: grid;
    place-items: center;
    width: 14px;
}
.view-buttons .active {
    background-color: #fdc877;
}
.view-buttons svg {
    width: 10px;
    height: 10px;
}
```
